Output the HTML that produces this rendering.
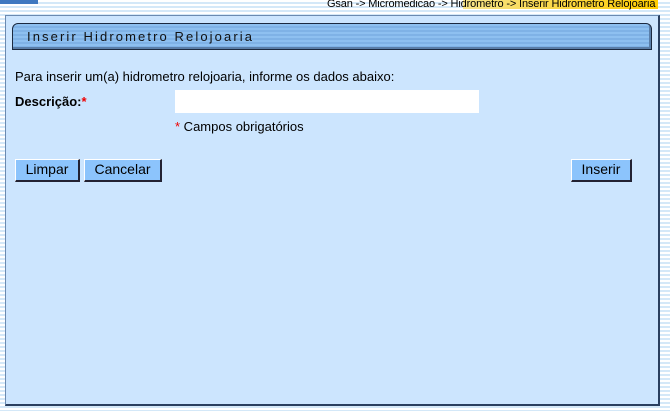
<!DOCTYPE html>
<html><head><style>
body{margin:0;width:670px;height:411px;overflow:hidden;position:relative;font-family:"Liberation Sans",Arial,sans-serif;
background:repeating-linear-gradient(#fff 0,#fff 2px,#d4e8f8 2px,#d4e8f8 4px);}
.topbar{position:absolute;left:0;top:0;width:38px;height:4px;background:#3f78c0}
.crumb{position:absolute;left:327px;top:-2px;font-size:11px;color:#000;white-space:nowrap;letter-spacing:-0.15px}
.hl{position:absolute;left:463px;top:0;width:195px;height:9px;background:linear-gradient(90deg,#f7e48a,#ffcc00)}
.panel{position:absolute;left:5px;top:15px;width:652px;height:388px;background:#cce5fe;border-right:2px solid #2a3f5f;border-bottom:2px solid #2a3f5f;border-left:1px solid #6b8ab0;border-top:1px solid #6b8ab0}
.title{position:absolute;left:12px;top:23px;width:638px;height:25px;border:1px solid #1c2a40;border-radius:6px 6px 0 0;
background:repeating-linear-gradient(#8ec0f0 0,#8ec0f0 2px,#7fb2e6 2px,#7fb2e6 4px);box-shadow:inset -2px -2px 0 #5a7ea8}
.title span{position:absolute;left:14px;top:5px;font-size:13px;letter-spacing:2.1px;color:#111}
.t{position:absolute;font-size:13px;color:#000;white-space:nowrap}
.req{color:#e00}
input{position:absolute;left:175px;top:90px;width:304px;height:23px;border:1px solid #fff;background:#fff;box-sizing:border-box;padding:0}
.btn{position:absolute;top:159px;height:23px;box-sizing:border-box;background:#8cc4fc;border:1px solid #fff;border-right:2px solid #223;border-bottom:2px solid #223;font-size:14px;text-align:center;line-height:19px}
</style></head><body>
<div class="topbar"></div>
<div class="hl"></div>
<div class="crumb">Gsan -&gt; Micromedicao -&gt; Hidrometro -&gt; Inserir Hidrometro Relojoaria</div>
<div class="panel"></div>
<div class="title"><span>Inserir Hidrometro Relojoaria</span></div>
<div class="t" style="left:15px;top:69px">Para inserir um(a) hidrometro relojoaria, informe os dados abaixo:</div>
<div class="t" style="left:15px;top:94px;font-weight:bold">Descrição:<span class="req">*</span></div>
<input type="text">
<div class="t" style="left:175px;top:119px"><span class="req">*</span> Campos obrigatórios</div>
<div class="btn" style="left:15px;width:65px">Limpar</div>
<div class="btn" style="left:84px;width:78px">Cancelar</div>
<div class="btn" style="left:571px;width:61px">Inserir</div>
</body></html>
